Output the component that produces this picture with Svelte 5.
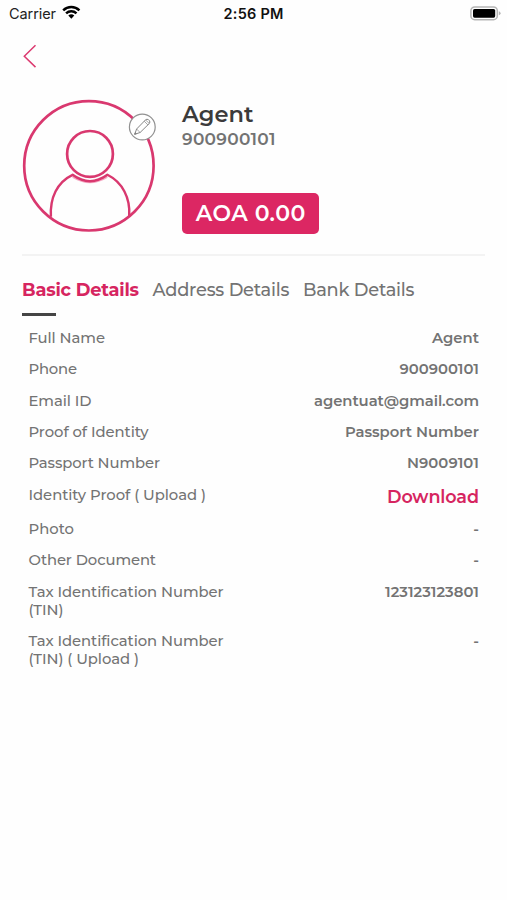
<script>
  const tabs = [
    { label: 'Basic Details', width: 117, active: true },
    { label: 'Address Details', width: 137 },
    { label: 'Bank Details', width: 111.5 },
  ];

  const rows = [
    { label: [['Full Name', 76.5]], value: 'Agent', width: 47 },
    { label: [['Phone', 48.5]], value: '900900101', width: 79.5 },
    { label: [['Email ID', 63]], value: 'agentuat@gmail.com', width: 165 },
    { label: [['Proof of Identity', 120]], value: 'Passport Number', width: 134 },
    { label: [['Passport Number', 131.5]], value: 'N9009101', width: 72 },
    { label: [['Identity Proof ( Upload )', 177.5]], value: 'Download', width: 92, link: true },
    { label: [['Photo', 45.5]], value: '-', width: 5.5 },
    { label: [['Other Document', 127.5]], value: '-', width: 5.5 },
    { label: [['Tax Identification Number', 195], ['(TIN)', 35]], value: '123123123801', width: 94 },
    { label: [['Tax Identification Number', 195], ['(TIN) ( Upload )', 110.5]], value: '-', width: 5.5 },
  ];

  // Tracks the text so that it spans the given width.
  function track(node, width) {
    const natural = node.getBoundingClientRect().width;
    const count = node.textContent.length;
    if (count < 2) return;
    const spacing = (width - natural) / (count - 1);
    node.style.letterSpacing = `${spacing}px`;
    node.style.marginRight = `${-spacing}px`;
  }
</script>

<main>
  <div class="status">
    <div class="carrier">
      <span class="t" use:track={47}>Carrier</span>
      <svg width="19" height="15" viewBox="0 0 19 15">
        <g fill="none" stroke="#000" stroke-width="2.5">
          <path d="M1.2 5.3a11.7 11.7 0 0 1 16.2 0" />
          <path d="M4.1 8.3a7.6 7.6 0 0 1 10.4 0" />
        </g>
        <path d="M6.3 10.6a4.5 4.5 0 0 1 6 0l-3 3.2z" fill="#000" />
      </svg>
    </div>
    <div class="time"><span class="t" use:track={60}>2:56 PM</span></div>
    <div class="battery">
      <svg width="31" height="15" viewBox="0 0 31 15">
        <rect x="0.9" y="0.9" width="26.4" height="12.8" rx="3.8" fill="#fff" stroke="#b5b5b5" stroke-width="1.5" />
        <rect x="3" y="3" width="22.2" height="8.7" rx="1.6" fill="#000" />
        <path d="M28.8 5.3q1.8.7 1.8 2t-1.8 2z" fill="#b5b5b5" />
      </svg>
    </div>
  </div>

  <nav class="back">
    <svg width="14" height="24" viewBox="0 0 14 24">
      <path d="M12.5 1.2 1.3 12.2l11.2 10.9" fill="none" stroke="#dc3a70" stroke-width="1.5" />
    </svg>
  </nav>

  <section class="profile">
    <svg class="avatar" width="136" height="136" viewBox="21 98 136 136">
      <g fill="none" stroke="#d9386f" stroke-width="2.7">
        <circle cx="88.9" cy="165.8" r="64.7" />
        <path d="M73 176.5Q90 187 107 176.5" stroke="#f5a9c3" stroke-width="3" />
        <circle cx="90" cy="153.9" r="22.9" />
        <path d="M50.9 216.8C49.8 198 57 182.2 72.6 174.8Q90 187.5 107.4 174.8C122.5 182.3 130.5 198 129.2 216" stroke-width="2.4" stroke-linejoin="round" />
      </g>
      <circle cx="142.3" cy="127" r="12.9" fill="#fff" stroke="#919191" stroke-width="1.2" />
      <g fill="none" stroke="#858585" stroke-width="1" stroke-linejoin="round">
        <path d="m134.700 134.300 1.900-5.300 8.900-9.100q1.400-1.300 3-.2l.8.800q1.300 1.500 0 3l-9.200 9z" />
        <path d="m136.600 129 3.500 3.500M144.200 121.200l3.800 3.800M145.500 119.900l3.800 3.600" stroke-width=".7" />
        <path d="m134.700 134.300.6-1.700 1.100 1z" fill="#777" />
      </g>
    </svg>
    <div class="info">
      <div class="name"><span class="t" use:track={71.5}>Agent</span></div>
      <div class="number"><span class="t" use:track={93.5}>900900101</span></div>
      <div class="balance"><span class="t" use:track={109.5}>AOA 0.00</span></div>
    </div>
  </section>

  <div class="tabs">
    {#each tabs as tab}
      <div class="tab" class:active={tab.active}>
        <span class="t" use:track={tab.width}>{tab.label}</span>
      </div>
    {/each}
  </div>

  <div class="details">
    {#each rows as row}
      <div class="row">
        <div class="label">
          {#each row.label as [text, width]}
            <div><span class="t" use:track={width}>{text}</span></div>
          {/each}
        </div>
        <div class="value" class:link={row.link}>
          <span class="t" use:track={row.width}>{row.value}</span>
        </div>
      </div>
    {/each}
  </div>
</main>

<style>
  :global(body) {
    background: #fefefe;
  }
  main {
    box-sizing: border-box;
    width: 507px;
    height: 900px;
    overflow: hidden;
    background: #fefefe;
    color: #737373;
    font-family: Montserrat, Inter, sans-serif;
  }
  svg {
    display: block;
  }
  .t {
    display: inline-block;
    white-space: pre;
  }
  .status {
    display: grid;
    grid-template-columns: 1fr auto 1fr;
    align-items: center;
    height: 28px;
    padding: 0 6px 0 9px;
    color: #222;
    font-family: Inter, sans-serif;
    font-size: 14.5px;
    line-height: 18px;
  }
  .carrier {
    display: flex;
    gap: 6px;
  }
  .time {
    margin-left: -3px;
    color: #111;
    font-weight: 600;
  }
  .battery {
    justify-self: end;
    margin-top: -2px;
  }
  .back {
    padding: 16px 0 0 23px;
  }
  .profile {
    display: flex;
    height: 156px;
    margin: 30px 22px 0 21px;
    padding-bottom: 2px;
    background: linear-gradient(#f3f3f3, #f3f3f3) right bottom / 463px 2px no-repeat;
  }
  .avatar {
    flex: none;
  }
  .info {
    display: flex;
    flex-direction: column;
    align-items: flex-start;
    margin-left: 25px;
  }
  .name {
    margin-top: 2px;
    color: #3b3b3b;
    font-size: 22.5px;
    font-weight: 600;
    line-height: 28px;
  }
  .number {
    font-size: 17px;
    font-weight: 600;
    line-height: 22px;
  }
  .balance {
    box-sizing: border-box;
    width: 137px;
    height: 41px;
    margin-top: 43px;
    border-radius: 5px;
    background: #dc2763;
    color: #fff;
    font-size: 22px;
    font-weight: 600;
    line-height: 41px;
    text-align: center;
  }
  .tabs {
    display: flex;
    gap: 13.5px;
    margin: 22px 0 0 22px;
    font-size: 17.8px;
    font-weight: 500;
    line-height: 24px;
  }
  .active {
    color: #d62560;
    font-weight: 700;
  }
  .active::after {
    content: '';
    display: block;
    width: 34px;
    height: 3px;
    margin-top: 11px;
    background: #454545;
  }
  .details {
    display: flex;
    flex-direction: column;
    gap: 13.33px;
    margin: 13px 28px 0 28.5px;
    font-size: 14.8px;
    line-height: 18px;
  }
  .label {
    font-weight: 500;
  }
  .row {
    display: flex;
    justify-content: space-between;
  }
  .value {
    font-weight: 600;
  }
  .link {
    color: #d62560;
    font-size: 17.6px;
    line-height: 21px;
  }
</style>
